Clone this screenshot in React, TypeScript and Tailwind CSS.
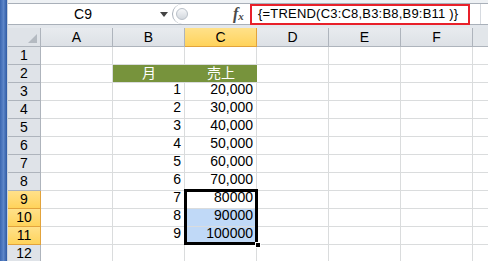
import React from "react";

const cols = ["A", "B", "C", "D", "E", "F"];

type Row = { n: number; b?: string; c?: string; head?: boolean };

const rows: Row[] = [
    { n: 1 },
    { n: 2, b: "月", c: "売上", head: true },
    { n: 3, b: "1", c: "20,000" },
    { n: 4, b: "2", c: "30,000" },
    { n: 5, b: "3", c: "40,000" },
    { n: 6, b: "4", c: "50,000" },
    { n: 7, b: "5", c: "60,000" },
    { n: 8, b: "6", c: "70,000" },
    { n: 9, b: "7", c: "80000" },
    { n: 10, b: "8", c: "90000" },
    { n: 11, b: "9", c: "100000" },
    { n: 12 },
];

const selectedRows = [9, 10, 11];

const Cell = ({ children, className = "" }: { children?: React.ReactNode; className?: string }) => (
    <div className={`flex h-full w-[72px] shrink-0 items-end justify-end border-r border-b border-[#dadcdd] pr-[3px] ${className}`}>
        {children}
    </div>
);

export default function App() {
    return (
        <div
            className="relative flex h-[261px] w-[488px] overflow-hidden bg-white text-[14px] text-black"
            style={{ fontFamily: '"Liberation Sans", "Noto Sans CJK JP", sans-serif' }}
        >
            {/* window edge */}
            <div className="h-full w-[7px] shrink-0 bg-gradient-to-r from-[#3a66b0] via-[#5d86c8] to-[#2f5aa3]" />
            <div className="w-px shrink-0 bg-[#c9d3e0]" />

            <div className="flex min-w-0 flex-1 flex-col">
                {/* formula bar */}
                <div className="flex h-[28px] shrink-0 flex-col bg-[#e3e7ec]">
                    <div className="h-[3px] bg-[#eef1f4]" />
                    <div className="flex h-[22px] items-stretch border-y border-[#a9b0b9] bg-white">
                        <div className="relative flex w-[164px] items-center justify-center">
                            <span className="pr-[14px] text-[14px]">C9</span>
                            <svg className="absolute right-[4px] top-[8px]" width="8" height="5" viewBox="0 0 8 5">
                                <path d="M0 0h8L4 5z" fill="#444" />
                            </svg>
                        </div>
                        <div className="flex flex-1 items-center rounded-l-full border-l border-[#aab1ba] bg-white">
                            <div className="ml-[3px] h-[12px] w-[12px] rounded-full border border-[#b9c0c8] bg-gradient-to-b from-[#f6f7f9] to-[#d3d8de]" />
                            <div className="ml-[45px] flex w-[15px] items-end italic text-[#4a4a4a]" style={{ fontFamily: '"Liberation Serif", serif' }}>
                                <span className="text-[16px] font-bold leading-none">f</span>
                                <span className="text-[11px] font-bold leading-none">x</span>
                            </div>
                            <div className="ml-[2px] flex h-[21px] w-[220px] shrink-0 items-center overflow-hidden border-2 border-[#e8202a] pl-[6px]">
                                <span className="whitespace-nowrap text-[13px] tracking-[0.2px]">{"{=TREND(C3:C8,B3:B8,B9:B11 )}"}</span>
                            </div>
                            <div className="ml-[10px] h-full w-px bg-[#d6dae0]" />
                        </div>
                    </div>
                    <div className="flex-1" />
                </div>

                {/* column headers */}
                <div className="flex h-[19px] shrink-0">
                    <div className="relative h-full w-[33px] shrink-0 border-r border-b border-[#aeb4bc] bg-[#dfe3e8]">
                        <svg className="absolute bottom-[3px] right-[3px]" width="9" height="9" viewBox="0 0 9 9">
                            <path d="M9 0v9H0z" fill="#b4bac1" />
                        </svg>
                    </div>
                    {cols.map((c) => (
                        <div
                            key={c}
                            className={`flex h-full w-[72px] shrink-0 items-center justify-center border-r border-b ${
                                c === "C"
                                    ? "border-[#e2a33c] bg-gradient-to-b from-[#ffe189] to-[#ffd35a]"
                                    : "border-[#aeb4bc] bg-gradient-to-b from-[#e8ebef] to-[#dde1e6]"
                            }`}
                        >
                            {c}
                        </div>
                    ))}
                    <div className="h-full flex-1 border-b border-[#aeb4bc] bg-[#e2e6ea]" />
                </div>

                {/* rows */}
                {rows.map((r) => {
                    const sel = selectedRows.includes(r.n);
                    return (
                        <div key={r.n} className="flex h-[18px] shrink-0">
                            <div
                                className={`flex h-full w-[33px] shrink-0 items-center justify-center border-r border-b ${
                                    sel
                                        ? "border-[#e2a33c] bg-gradient-to-b from-[#ffe189] to-[#ffd35a]"
                                        : "border-[#aeb4bc] bg-[#dfe3e8]"
                                }`}
                            >
                                {r.n}
                            </div>
                            <Cell />
                            {r.head ? (
                                <div className="flex h-full w-[144px] shrink-0 border-b border-[#dadcdd] bg-[#77933c] text-white">
                                    <div className="flex w-[72px] items-center justify-center">{r.b}</div>
                                    <div className="flex w-[72px] items-center justify-center">{r.c}</div>
                                </div>
                            ) : (
                                <>
                                    <Cell>{r.b}</Cell>
                                    <Cell className={r.n === 10 || r.n === 11 ? "bg-[#c0d9f7]" : ""}>{r.c}</Cell>
                                </>
                            )}
                            <Cell />
                            <Cell />
                            <Cell />
                            <div className="h-full flex-1 border-b border-[#dadcdd]" />
                        </div>
                    );
                })}
            </div>

            {/* selection outline C9:C11 */}
            <div className="absolute left-[184px] top-[189px] h-[56px] w-[74px] border-[3px] border-black" />
            <div className="absolute left-[255px] top-[242px] h-[6px] w-[6px] border border-white bg-black" />
        </div>
    );
}
